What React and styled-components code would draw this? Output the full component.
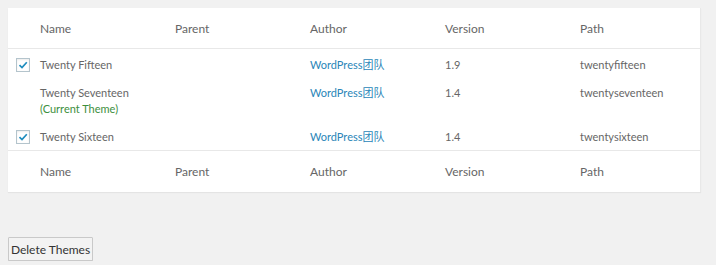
import * as React from 'react';
import styled, { createGlobalStyle } from 'styled-components';

const Global = createGlobalStyle`
  html, body {
    margin: 0;
    padding: 0;
    background: #f1f1f1;
  }
  body {
    font-family: Lato, "Noto Sans CJK SC", sans-serif;
    font-size: 11px;
    color: #666;
  }
`;

const Page = styled.div`
  padding: 8px 15px 0 8px;
`;

const Panel = styled.div`
  background: #fff;
  box-shadow: 0 1px 1px rgba(0,0,0,0.05);
  border-right: 1px solid #e8e8e8;
`;

const Table = styled.table`
  width: 100%;
  border-collapse: collapse;
  table-layout: fixed;
`;

const HeadCell = styled.th`
  text-align: left;
  font-weight: 400;
  font-size: 12px;
  color: #666;
  height: ${p => (p.$foot ? '41px' : '40px')};
  padding: 0;
  border-bottom: ${p => (p.$foot ? 'none' : '1px solid #e8e8e8')};
  border-top: ${p => (p.$foot ? '1px solid #e8e8e8' : 'none')};
  vertical-align: middle;
`;

const CheckCol = styled.col`
  width: 32px;
`;

const DataCol = styled.col`
  width: 135px;
`;

const Cell = styled.td`
  padding: 8px 0 ${p => (p.$last ? '5px' : '4px')};
  vertical-align: top;
  line-height: 16px;
`;

const CheckCell = styled.td`
  padding: 9px 0 0 8px;
  vertical-align: top;
  line-height: 0;
`;

const Box = styled.span`
  display: inline-flex;
  align-items: center;
  justify-content: center;
  width: 14px;
  height: 14px;
  box-sizing: border-box;
  border: 1px solid #b4c4cc;
  background: #fff;
  box-shadow: inset 0 1px 2px rgba(0,0,0,0.08);
`;

const Link = styled.a`
  color: #2a86b8;
  text-decoration: none;
`;

const Current = styled.div`
  color: #3d8f3d;
`;

const Button = styled.button`
  margin-top: 45px;
  font-family: Lato, sans-serif;
  font-size: 12px;
  color: #333;
  background: #f3f3f3;
  border: 1px solid #c9c9c9;
  box-shadow: 0 1px 0 #ccc;
  height: 24px;
  width: 85px;
  padding: 0;
  border-radius: 1px;
`;

const Check = () => (
  <svg width="12" height="12" viewBox="0 0 12 12">
    <path d="M2.5 6.2 L5 8.6 L9.8 3.2" fill="none" stroke="#1e8cbe" strokeWidth="1.7" />
  </svg>
);

const themes = [
  { name: 'Twenty Fifteen', version: '1.9', path: 'twentyfifteen', checked: true },
  { name: 'Twenty Seventeen', version: '1.4', path: 'twentyseventeen', current: true },
  { name: 'Twenty Sixteen', version: '1.4', path: 'twentysixteen', checked: true },
];

const Header = ({ foot }) => (
  <tr>
    <HeadCell $foot={foot} />
    <HeadCell $foot={foot}>Name</HeadCell>
    <HeadCell $foot={foot}>Parent</HeadCell>
    <HeadCell $foot={foot}>Author</HeadCell>
    <HeadCell $foot={foot}>Version</HeadCell>
    <HeadCell $foot={foot}>Path</HeadCell>
  </tr>
);

export default function App() {
  return (
    <Page>
      <Global />
      <Panel>
        <Table>
          <colgroup>
            <CheckCol />
            <DataCol />
            <DataCol />
            <DataCol />
            <DataCol />
            <col />
          </colgroup>
          <thead>
            <Header />
          </thead>
          <tbody>
            {themes.map((t, i) => {
              const last = i === themes.length - 1;
              return (
                <tr key={t.path}>
                  <CheckCell>
                    {t.checked ? <Box><Check /></Box> : null}
                  </CheckCell>
                  <Cell $last={last}>
                    {t.name}
                    {t.current ? <Current>(Current Theme)</Current> : null}
                  </Cell>
                  <Cell $last={last}></Cell>
                  <Cell $last={last}><Link href="#">WordPress团队</Link></Cell>
                  <Cell $last={last}>{t.version}</Cell>
                  <Cell $last={last}>{t.path}</Cell>
                </tr>
              );
            })}
          </tbody>
          <tfoot>
            <Header foot />
          </tfoot>
        </Table>
      </Panel>
      <Button>Delete Themes</Button>
    </Page>
  );
}
